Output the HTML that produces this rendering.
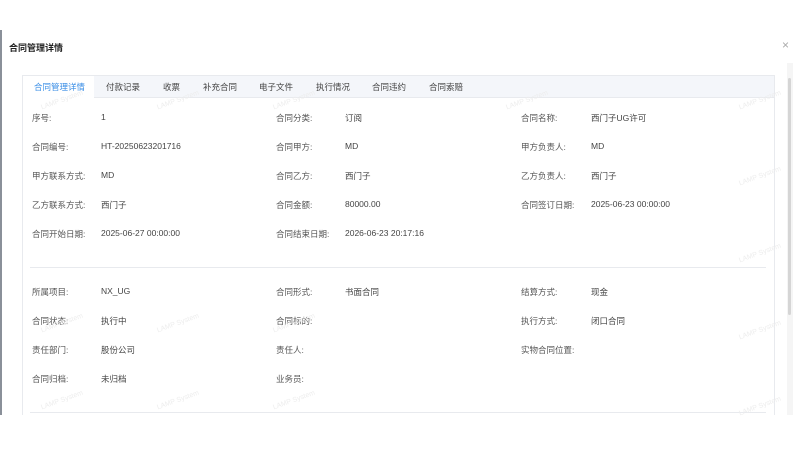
<!DOCTYPE html>
<html><head><meta charset="utf-8"><style>
*{margin:0;padding:0;box-sizing:border-box}
body{width:800px;height:450px;background:#fff;position:relative;overflow:hidden;font-family:"Liberation Sans","Noto Sans CJK SC",sans-serif;font-size:8.5px;color:#444}
.abs{position:absolute;white-space:nowrap}
.lb{color:#555}
.wm{position:absolute;color:#ededed;font-size:7px;transform:rotate(-20deg);white-space:nowrap}
</style></head><body>
<div class="abs" style="left:0;top:30px;width:2px;height:385px;background:#8a9099"></div>
<div class="abs" style="left:9px;top:41px;font-weight:bold;color:#222;font-size:9px">合同管理详情</div>
<div class="abs" style="left:782px;top:38px;color:#aaa;font-size:12px">×</div>
<div class="abs" style="left:787px;top:63px;width:6px;height:352px;background:#f5f5f5"></div>
<div class="abs" style="left:788px;top:78px;width:3px;height:237px;background:#d5d5d5;border-radius:2px"></div>
<div class="abs" style="left:22px;top:75px;width:753px;height:340px;border:1px solid #e8eaee;border-bottom:none"></div>
<div class="abs" style="left:22px;top:75px;width:753px;height:23px;background:#f4f6fa;border:1px solid #e8eaee"></div>
<div class="abs" style="left:23px;top:76px;width:71px;height:23px;background:#fff"></div>
<div class="abs" style="left:34px;top:81px;color:#3a8ee6">合同管理详情</div>
<div class="abs" style="left:106px;top:81px">付款记录</div>
<div class="abs" style="left:163px;top:81px">收票</div>
<div class="abs" style="left:203px;top:81px">补充合同</div>
<div class="abs" style="left:259px;top:81px">电子文件</div>
<div class="abs" style="left:316px;top:81px">执行情况</div>
<div class="abs" style="left:372px;top:81px">合同违约</div>
<div class="abs" style="left:429px;top:81px">合同索赔</div>
<div class="abs" style="left:30px;top:267px;width:736px;height:1px;background:#e8eaee"></div>
<div class="abs" style="left:30px;top:412px;width:736px;height:1px;background:#e8eaee"></div>

<div class="abs lb" style="left:32px;top:112px">序号:</div><div class="abs" style="left:101px;top:112px">1</div>
<div class="abs lb" style="left:276px;top:112px">合同分类:</div><div class="abs" style="left:345px;top:112px">订阅</div>
<div class="abs lb" style="left:521px;top:112px">合同名称:</div><div class="abs" style="left:591px;top:112px">西门子UG许可</div>

<div class="abs lb" style="left:32px;top:141px">合同编号:</div><div class="abs" style="left:101px;top:141px">HT-20250623201716</div>
<div class="abs lb" style="left:276px;top:141px">合同甲方:</div><div class="abs" style="left:345px;top:141px">MD</div>
<div class="abs lb" style="left:521px;top:141px">甲方负责人:</div><div class="abs" style="left:591px;top:141px">MD</div>

<div class="abs lb" style="left:32px;top:170px">甲方联系方式:</div><div class="abs" style="left:101px;top:170px">MD</div>
<div class="abs lb" style="left:276px;top:170px">合同乙方:</div><div class="abs" style="left:345px;top:170px">西门子</div>
<div class="abs lb" style="left:521px;top:170px">乙方负责人:</div><div class="abs" style="left:591px;top:170px">西门子</div>

<div class="abs lb" style="left:32px;top:199px">乙方联系方式:</div><div class="abs" style="left:101px;top:199px">西门子</div>
<div class="abs lb" style="left:276px;top:199px">合同金额:</div><div class="abs" style="left:345px;top:199px">80000.00</div>
<div class="abs lb" style="left:521px;top:199px">合同签订日期:</div><div class="abs" style="left:591px;top:199px">2025-06-23 00:00:00</div>

<div class="abs lb" style="left:32px;top:228px">合同开始日期:</div><div class="abs" style="left:101px;top:228px">2025-06-27 00:00:00</div>
<div class="abs lb" style="left:276px;top:228px">合同结束日期:</div><div class="abs" style="left:345px;top:228px">2026-06-23 20:17:16</div>

<div class="abs lb" style="left:32px;top:286px">所属项目:</div><div class="abs" style="left:101px;top:286px">NX_UG</div>
<div class="abs lb" style="left:276px;top:286px">合同形式:</div><div class="abs" style="left:345px;top:286px">书面合同</div>
<div class="abs lb" style="left:521px;top:286px">结算方式:</div><div class="abs" style="left:591px;top:286px">现金</div>

<div class="abs lb" style="left:32px;top:315px">合同状态:</div><div class="abs" style="left:101px;top:315px">执行中</div>
<div class="abs lb" style="left:276px;top:315px">合同标的:</div>
<div class="abs lb" style="left:521px;top:315px">执行方式:</div><div class="abs" style="left:591px;top:315px">闭口合同</div>

<div class="abs lb" style="left:32px;top:344px">责任部门:</div><div class="abs" style="left:101px;top:344px">股份公司</div>
<div class="abs lb" style="left:276px;top:344px">责任人:</div>
<div class="abs lb" style="left:521px;top:344px">实物合同位置:</div>

<div class="abs lb" style="left:32px;top:373px">合同归档:</div><div class="abs" style="left:101px;top:373px">未归档</div>
<div class="abs lb" style="left:276px;top:373px">业务员:</div>

<div class="wm" style="left:40px;top:97px">LAMP System</div><div class="wm" style="left:156px;top:97px">LAMP System</div><div class="wm" style="left:272px;top:97px">LAMP System</div><div class="wm" style="left:505px;top:97px">LAMP System</div><div class="wm" style="left:738px;top:97px">LAMP System</div>
<div class="wm" style="left:738px;top:173px">LAMP System</div><div class="wm" style="left:738px;top:250px">LAMP System</div><div class="wm" style="left:738px;top:327px">LAMP System</div><div class="wm" style="left:738px;top:403px">LAMP System</div>
<div class="wm" style="left:40px;top:320px">LAMP System</div><div class="wm" style="left:156px;top:320px">LAMP System</div><div class="wm" style="left:272px;top:320px">LAMP System</div>
<div class="wm" style="left:40px;top:397px">LAMP System</div><div class="wm" style="left:156px;top:397px">LAMP System</div><div class="wm" style="left:272px;top:397px">LAMP System</div>
</body></html>
